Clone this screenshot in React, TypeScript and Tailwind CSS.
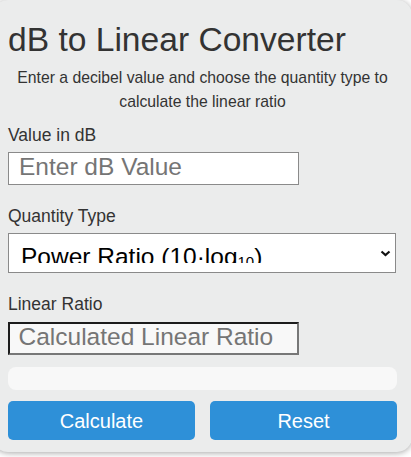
const font = "font-['Liberation_Sans','DejaVu_Sans',Arial,sans-serif]";

function Label({ children }: { children: string }) {
  return <div className="text-[17.5px] leading-[20px] text-[#333]">{children}</div>;
}

export default function App() {
  return (
    <div className={`h-[457px] w-[411px] overflow-hidden bg-white ${font}`}>
      <div className="ml-[-7px] h-[452px] w-[419px] rounded-[15px] bg-[#ebecec] px-[15px] pt-[21px] shadow-[0_1px_6px_rgba(0,0,0,0.35)]">
        <h1 className="text-[33.6px] leading-[38px] text-[#333]">dB to Linear Converter</h1>
        <p className="mt-[7px] text-center text-[15.75px] leading-[24px] text-[#333]">
          Enter a decibel value and choose the quantity type to
          <br />
          calculate the linear ratio
        </p>

        <div className="mt-[11px]">
          <Label>Value in dB</Label>
        </div>
        <div className="mt-[7px] h-[33px] w-[291px] border border-[#8a8a8a] bg-white pl-[10px] text-[24.5px] leading-[28px] text-[#757575]">
          Enter dB Value
        </div>

        <div className="mt-[21px]">
          <Label>Quantity Type</Label>
        </div>
        <div className="relative mt-[7px] h-[40px] w-[388px] border border-[#8a8a8a] bg-white">
          <div className="h-[28.5px] overflow-hidden whitespace-nowrap pl-[12px] pt-[8.5px] text-[24.5px] leading-[28px] text-black">
            Power Ratio (10·log<span className="relative top-[2px] text-[15px]">10</span>)
          </div>
          <svg className="absolute right-[4px] top-[16px]" width="11" height="7" viewBox="0 0 11 7">
            <polyline points="1.5,1.5 5.5,5 9.5,1.5" fill="none" stroke="#111" strokeWidth="2.2" />
          </svg>
        </div>

        <div className="mt-[21px]">
          <Label>Linear Ratio</Label>
        </div>
        <div className="mt-[8px] h-[33px] w-[291px] border-2 border-b-[#777] border-l-[#1c1c1c] border-r-[#777] border-t-[#1c1c1c] bg-[#f8f8f8] pl-[8.5px] text-[24.5px] leading-[25px] text-[#757575]">
          Calculated Linear Ratio
        </div>

        <div className="mt-[12px] h-[22.5px] rounded-[8px] bg-[#f8f8f8]" />

        <div className="mt-[11.5px] flex gap-[15px]">
          <button className="h-[39px] flex-1 rounded-[5px] bg-[#2e90d8] text-[20px] text-white">Calculate</button>
          <button className="h-[39px] flex-1 rounded-[5px] bg-[#2e90d8] text-[20px] text-white">Reset</button>
        </div>
      </div>
    </div>
  );
}
